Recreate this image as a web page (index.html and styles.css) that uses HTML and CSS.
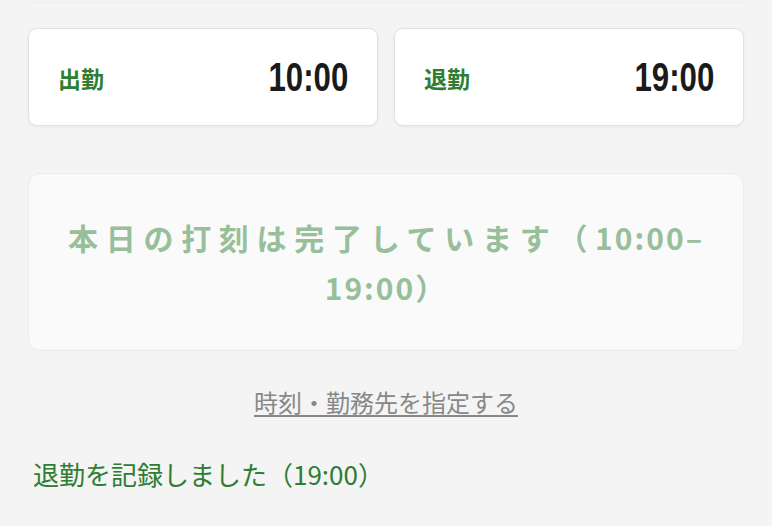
FILE: index.html
```html
<!DOCTYPE html>
<html lang="ja">
<head>
<meta charset="utf-8">
<link rel="stylesheet" href="styles.css">
</head>
<body>
<div class="page">
  <div class="prev-edge"></div>
  <div class="punches">
    <div class="punch">
      <span class="punch-label">出勤</span>
      <span class="punch-time">10:00</span>
    </div>
    <div class="punch">
      <span class="punch-label">退勤</span>
      <span class="punch-time">19:00</span>
    </div>
  </div>
  <div class="done"><p class="done-text">本日の打刻は完了しています（10:00–19:00）</p></div>
  <div class="link-row"><a class="custom-link" href="#">時刻・勤務先を指定する</a></div>
  <div class="message">退勤を記録しました（19:00）</div>
</div>
</body>
</html>
```
FILE: styles.css
```css
html, body {
  margin: 0;
  padding: 0;
  background: #f4f4f4;
  font-family: "Noto Sans CJK JP", "Noto Sans", sans-serif;
}
.page {
  padding: 0 28px;
}
.prev-edge {
  height: 1px;
  margin: 0 0 0 2px;
  background: #f4f4f4;
  box-shadow: 0 1px 3px rgba(0,0,0,0.06);
}
.punches {
  display: grid;
  grid-template-columns: 1fr 1fr;
  gap: 16px;
  margin-top: 27px;
}
.punch {
  height: 98px;
  box-sizing: border-box;
  background: #fff;
  border: 1px solid #e2e2e2;
  border-radius: 9px;
  box-shadow: 0 1px 3px rgba(0,0,0,0.06);
  display: flex;
  align-items: center;
  justify-content: space-between;
  padding: 0 29px;
}
.punch-label {
  color: #2e7d32;
  font-weight: 700;
  font-size: 23px;
  padding-top: 2px;
}
.punch-time {
  display: inline-block;
  font-family: "Liberation Sans", sans-serif;
  font-weight: 700;
  font-size: 40px;
  color: #1a1a1a;
  transform: scaleX(0.78);
  transform-origin: right center;
}
.done {
  margin-top: 47px;
  height: 178px;
  box-sizing: border-box;
  background: #fafafa;
  border: 1px solid #ebebeb;
  border-radius: 12px;
  display: flex;
  align-items: center;
  padding: 0 39px;
}
.done-text {
  margin: 0;
  width: 100%;
  text-align: justify;
  text-align-last: center;
  color: #97bf9a;
  font-weight: 700;
  font-size: 30px;
  line-height: 50px;
  letter-spacing: 2px;
}
.link-row {
  text-align: center;
  margin-top: 33px;
}
.custom-link {
  color: #888;
  font-size: 24px;
  text-decoration: underline;
  text-decoration-thickness: 2px;
  text-underline-offset: 3px;
}
.message {
  margin-top: 36px;
  margin-left: 5px;
  color: #2e7d32;
  font-size: 26px;
  font-weight: 400;
}
```
